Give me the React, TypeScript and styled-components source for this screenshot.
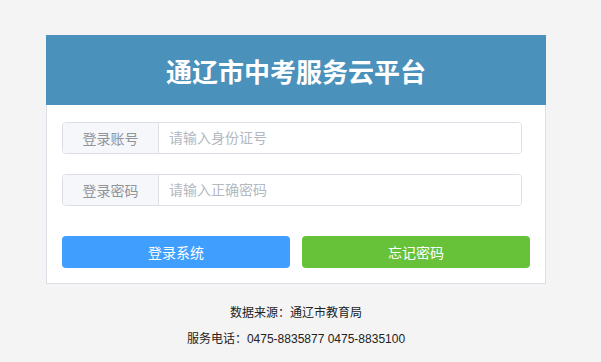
import styled, { createGlobalStyle } from "styled-components";

const GlobalStyle = createGlobalStyle`
  html, body {
    margin: 0;
    padding: 0;
    background: #f4f4f4;
    font-family: "Liberation Sans", "Noto Sans CJK SC", sans-serif;
  }
`;

const Page = styled.div`
  width: 500px;
  margin: 35px 0 0 46px;
`;

const Card = styled.div`
  background: #fff;
  border: 1px solid #dcdfe6;
  border-top: none;
`;

const Header = styled.div`
  height: 70px;
  margin: 0 -1px;
  background: #4a91bc;
  display: flex;
  align-items: center;
  justify-content: center;
`;

const Title = styled.h1`
  margin: 0;
  color: #fff;
  font-size: 26px;
  font-weight: bold;
`;

const Body = styled.div`
  padding: 17px 15px 15px;
  display: flex;
  flex-direction: column;
  gap: 20px;
`;

const InputGroup = styled.div`
  display: flex;
  width: 460px;
  height: 32px;
  box-sizing: border-box;
  border: 1px solid #dcdfe6;
  border-radius: 4px;
  overflow: hidden;
`;

const Prepend = styled.div`
  width: 95px;
  flex: none;
  display: flex;
  align-items: center;
  justify-content: center;
  background: #f5f7fa;
  border-right: 1px solid #dcdfe6;
  color: #909399;
  font-size: 14px;
`;

const Input = styled.input`
  flex: 1;
  border: none;
  outline: none;
  padding: 0 10px;
  font-size: 14px;
  font-family: inherit;
  color: #606266;
  &::placeholder {
    color: #b4b8bf;
  }
`;

const Buttons = styled.div`
  display: grid;
  grid-template-columns: 1fr 1fr;
  gap: 12px;
  margin-top: 10px;
`;

const Button = styled.button<{ $color: string }>`
  height: 32px;
  border: none;
  border-radius: 4px;
  background: ${(p) => p.$color};
  color: #fff;
  font-size: 14px;
  font-family: inherit;
  cursor: pointer;
`;

const Footer = styled.div`
  padding-top: 16px;
  text-align: center;
  font-size: 12px;
  color: #222;
  line-height: 26px;
`;

const Line = styled.p`
  margin: 0;
`;

export default function App() {
  return (
    <>
      <GlobalStyle />
      <Page>
        <Card>
          <Header>
            <Title>通辽市中考服务云平台</Title>
          </Header>
          <Body>
            <InputGroup>
              <Prepend>登录账号</Prepend>
              <Input placeholder="请输入身份证号" />
            </InputGroup>
            <InputGroup>
              <Prepend>登录密码</Prepend>
              <Input type="password" placeholder="请输入正确密码" />
            </InputGroup>
            <Buttons>
              <Button $color="#409eff">登录系统</Button>
              <Button $color="#67c23a">忘记密码</Button>
            </Buttons>
          </Body>
        </Card>
        <Footer>
          <Line>数据来源：通辽市教育局</Line>
          <Line>服务电话：0475-8835877 0475-8835100</Line>
        </Footer>
      </Page>
    </>
  );
}
